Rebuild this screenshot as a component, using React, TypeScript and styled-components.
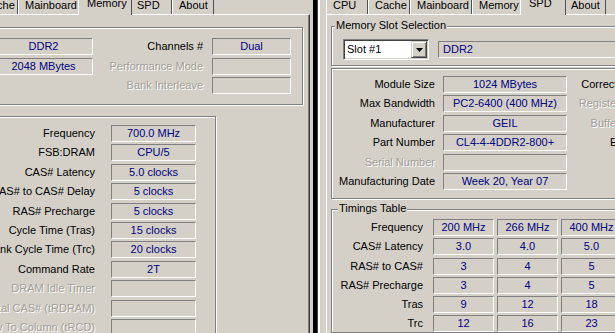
import React from 'react';
import styled, { createGlobalStyle, css } from 'styled-components';

const FACE = '#d4d0c8';
const SHADOW = '#808080';
const DARK = '#404040';
const NAVY = '#000080';
const GREY_TEXT = '#a29e96';

const GlobalStyle = createGlobalStyle`
  html, body {
    margin: 0;
    padding: 0;
    background: ${FACE};
  }
  body {
    font-family: "Liberation Sans", Arial, sans-serif;
    font-size: 11px;
    color: #000;
  }
`;

const Screen = styled.div`
  width: 615px;
  height: 333px;
  display: flex;
  overflow: hidden;
  background: ${FACE};
`;

const Window = styled.div<{ $width?: number }>`
  ${p => (p.$width ? css`flex: 0 0 ${p.$width}px;` : css`flex: 1 1 auto;`)}
  min-width: 0;
  display: flex;
  flex-direction: column;
  overflow: hidden;
`;

// frame edges between the two cpu-z windows
const Divider = styled.div`
  flex: 0 0 16px;
  background: linear-gradient(
    to right,
    ${FACE} 0 3px,
    #000 3px 7px,
    ${DARK} 7px 8px,
    #fff 8px 10px,
    ${FACE} 10px
  );
`;

const TabStrip = styled.div<{ $shift?: number }>`
  flex: 0 0 14px;
  height: 14px;
  min-height: 0;
  display: flex;
  align-items: flex-end;
  margin-left: ${p => p.$shift ?? 0}px;
  position: relative;
  z-index: 1;
`;

const Tab = styled.div<{ $w: number; $active?: boolean }>`
  flex: 0 0 ${p => p.$w}px;
  box-sizing: border-box;
  height: 20px;
  padding: 0 0 2px 6px;
  display: flex;
  align-items: flex-end;
  line-height: 13px;
  white-space: nowrap;
  background: ${FACE};
  border-left: 1px solid #fff;
  border-right: 1px solid #505050;

  ${p =>
    p.$active &&
    css`
      flex-basis: ${p.$w + 4}px;
      margin: 0 -2px -1px;
      height: 23px;
      padding-left: 8px;
      padding-bottom: 5px;
      position: relative;
      z-index: 2;
    `}
`;

const Sheet = styled.div<{ $edge: 'left' | 'right' }>`
  flex: 1 1 auto;
  min-height: 0;
  display: flex;
  flex-direction: column;
  align-items: flex-start;
  border-top: 1px solid #fff;
  ${p =>
    p.$edge === 'left'
      ? css`
          border-right: 1px solid ${DARK};
          box-shadow: inset -1px 0 0 ${SHADOW};
        `
      : css`
          border-left: 1px solid #fff;
        `}
`;

const Group = styled.div<{ $top: number; $left: number; $width: number }>`
  position: relative;
  flex: none;
  box-sizing: border-box;
  width: ${p => p.$width}px;
  margin-top: ${p => p.$top}px;
  margin-left: ${p => p.$left}px;
  border: 1px solid ${SHADOW};
  box-shadow: inset 1px 1px 0 #fff, 1px 1px 0 #fff;
`;

const Legend = styled.span<{ $left: number }>`
  position: absolute;
  top: -8px;
  left: ${p => p.$left}px;
  padding: 0 1px;
  line-height: 13px;
  white-space: nowrap;
  background: ${FACE};
`;

const Label = styled.div<{ $disabled?: boolean }>`
  line-height: 17px;
  text-align: right;
  white-space: nowrap;
  color: ${p => (p.$disabled ? GREY_TEXT : '#000')};
  text-shadow: ${p => (p.$disabled ? '1px 1px 0 #fff' : 'none')};
`;

const TableLabel = styled(Label)`
  padding-right: 7px;
`;

const ValueBox = styled.div<{ $align?: 'left' | 'center' }>`
  box-sizing: border-box;
  height: 17px;
  line-height: 15px;
  padding: 0 4px;
  border: 1px solid;
  border-color: ${SHADOW} #fff #fff ${SHADOW};
  color: ${NAVY};
  text-align: ${p => p.$align ?? 'center'};
  white-space: nowrap;
  overflow: hidden;
`;

const GeneralGrid = styled.div`
  display: grid;
  grid-template-columns: 99px 101px 79px;
  grid-auto-rows: 17px;
  column-gap: 9px;
  row-gap: 2.5px;
  padding: 10px 11px 10px 5px;
`;

const MemTimingsGrid = styled.div`
  display: grid;
  grid-template-columns: 150px 85px;
  grid-auto-rows: 17px;
  column-gap: 16px;
  row-gap: 2.4px;
  padding: 8px 19px 0 4px;
`;

const SlotRow = styled.div`
  display: flex;
  align-items: center;
  gap: 9px;
  padding: 12px 0 5px 11px;
`;

const Combo = styled.div`
  box-sizing: border-box;
  flex: 0 0 86px;
  height: 21px;
  display: flex;
  align-items: center;
  padding: 1px;
  background: #fff;
  border: 1px solid;
  border-color: ${SHADOW} #fff #fff ${SHADOW};
  box-shadow: inset 1px 1px 0 ${DARK}, inset -1px -1px 0 ${FACE};
`;

const ComboText = styled.span`
  flex: 1;
  padding-left: 2px;
  line-height: 17px;
  color: #000;
`;

const ComboButton = styled.div`
  box-sizing: border-box;
  flex: 0 0 16px;
  height: 17px;
  display: flex;
  align-items: center;
  justify-content: center;
  background: ${FACE};
  border: 1px solid;
  border-color: ${FACE} ${DARK} ${DARK} ${FACE};
  box-shadow: inset 1px 1px 0 #fff, inset -1px -1px 0 ${SHADOW};
`;

const TypeBox = styled(ValueBox)`
  flex: 0 0 200px;
`;

const ModuleGrid = styled.div`
  display: grid;
  grid-template-columns: 103px 124px 57px;
  grid-auto-rows: 17px;
  column-gap: 8px;
  row-gap: 2.4px;
  padding: 7px 0 8px 0;
`;

const SpdTimingsGrid = styled.div`
  display: grid;
  grid-template-columns: 98px 61px 61px 61px;
  grid-auto-rows: 17px;
  column-gap: 3px;
  row-gap: 2.3px;
  padding: 9px 0 0 0;
`;

const TABS: [string, number][] = [
  ['CPU', 42],
  ['Cache', 42],
  ['Mainboard', 62],
  ['Memory', 50],
  ['SPD', 42],
  ['About', 42],
];

const generalRows = [
  { value: 'DDR2', label: 'Channels #', right: 'Dual', disabled: false },
  { value: '2048 MBytes', label: 'Performance Mode', right: '', disabled: true },
  { value: null, label: 'Bank Interleave', right: '', disabled: true },
];

const memTimings: [string, string, boolean?][] = [
  ['Frequency', '700.0 MHz'],
  ['FSB:DRAM', 'CPU/5'],
  ['CAS# Latency', '5.0 clocks'],
  ['RAS# to CAS# Delay', '5 clocks'],
  ['RAS# Precharge', '5 clocks'],
  ['Cycle Time (Tras)', '15 clocks'],
  ['Bank Cycle Time (Trc)', '20 clocks'],
  ['Command Rate', '2T'],
  ['DRAM Idle Timer', '', true],
  ['Total CAS# (tRDRAM)', '', true],
  ['Row To Column (tRCD)', '', true],
];

const moduleRows = [
  { label: 'Module Size', value: '1024 MBytes', side: 'Correction', sideOff: false },
  { label: 'Max Bandwidth', value: 'PC2-6400 (400 MHz)', side: 'Registered', sideOff: true },
  { label: 'Manufacturer', value: 'GEIL', side: 'Buffered', sideOff: true },
  { label: 'Part Number', value: 'CL4-4-4DDR2-800+', side: 'EPP', sideOff: false },
  { label: 'Serial Number', value: '', side: '', sideOff: false, off: true },
  { label: 'Manufacturing Date', value: 'Week 20, Year 07', side: '', sideOff: false },
];

const spdTimings: [string, string, string, string][] = [
  ['Frequency', '200 MHz', '266 MHz', '400 MHz'],
  ['CAS# Latency', '3.0', '4.0', '5.0'],
  ['RAS# to CAS#', '3', '4', '5'],
  ['RAS# Precharge', '3', '4', '5'],
  ['Tras', '9', '12', '18'],
  ['Trc', '12', '16', '23'],
];

const Tabs = ({ active, shift }: { active: string; shift?: number }) => (
  <TabStrip $shift={shift}>
    {TABS.map(([name, w]) => (
      <Tab key={name} $w={w} $active={name === active}>
        {name}
      </Tab>
    ))}
  </TabStrip>
);

const MemoryWindow = () => (
  <Window $width={310}>
    <Tabs active="Memory" shift={-66} />
    <Sheet $edge="left">
      <Group $top={12} $left={-12} $width={315}>
        <GeneralGrid>
          {generalRows.map(row => (
            <React.Fragment key={row.label}>
              {row.value !== null ? <ValueBox>{row.value}</ValueBox> : <div />}
              <Label $disabled={row.disabled}>{row.label}</Label>
              <ValueBox>{row.right}</ValueBox>
            </React.Fragment>
          ))}
        </GeneralGrid>
      </Group>
      <Group $top={11} $left={-60} $width={276}>
        <MemTimingsGrid>
          {memTimings.map(([label, value, off]) => (
            <React.Fragment key={label}>
              <Label $disabled={off}>{label}</Label>
              <ValueBox>{value}</ValueBox>
            </React.Fragment>
          ))}
        </MemTimingsGrid>
      </Group>
    </Sheet>
  </Window>
);

const SpdWindow = () => (
  <Window>
    <Tabs active="SPD" />
    <Sheet $edge="right">
      <Group $top={11} $left={4} $width={330}>
        <Legend $left={3}>Memory Slot Selection</Legend>
        <SlotRow>
          <Combo>
            <ComboText>Slot #1</ComboText>
            <ComboButton>
              <svg width="7" height="4" viewBox="0 0 7 4">
                <polygon points="0,0 7,0 3.5,4" fill="#000" />
              </svg>
            </ComboButton>
          </Combo>
          <TypeBox $align="left">DDR2</TypeBox>
        </SlotRow>
      </Group>
      <Group $top={2} $left={4} $width={330}>
        <ModuleGrid>
          {moduleRows.map(row => (
            <React.Fragment key={row.label}>
              <Label $disabled={row.off}>{row.label}</Label>
              <ValueBox>{row.value}</ValueBox>
              <Label $disabled={row.sideOff}>{row.side}</Label>
            </React.Fragment>
          ))}
        </ModuleGrid>
      </Group>
      <Group $top={10} $left={4} $width={330}>
        <Legend $left={6}>Timings Table</Legend>
        <SpdTimingsGrid>
          {spdTimings.map(([label, a, b, c]) => (
            <React.Fragment key={label}>
              <TableLabel>{label}</TableLabel>
              <ValueBox>{a}</ValueBox>
              <ValueBox>{b}</ValueBox>
              <ValueBox>{c}</ValueBox>
            </React.Fragment>
          ))}
        </SpdTimingsGrid>
      </Group>
    </Sheet>
  </Window>
);

const App = () => (
  <>
    <GlobalStyle />
    <Screen>
      <MemoryWindow />
      <Divider />
      <SpdWindow />
    </Screen>
  </>
);

export default App;
